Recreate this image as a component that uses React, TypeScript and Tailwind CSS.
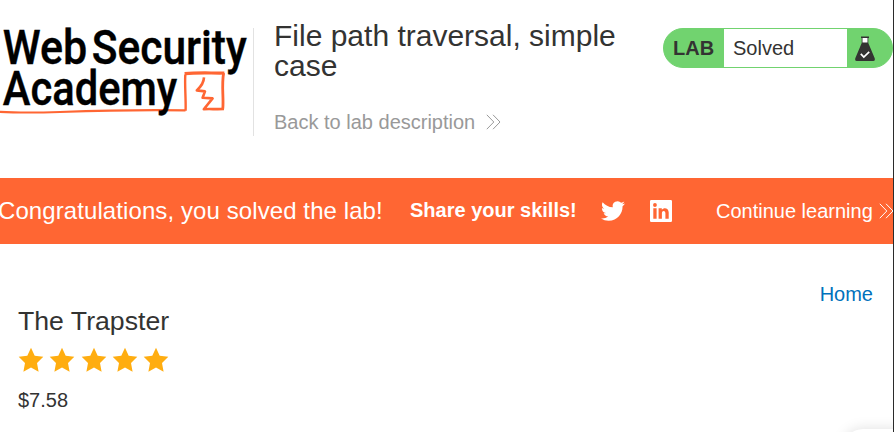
function AcademyLogo() {
  return (
    <svg className="block h-[120px] w-[250px] shrink-0" viewBox="0 8 250 120" role="img" aria-label="Web Security Academy">
      <g className="fill-black stroke-black font-['Roboto',sans-serif] text-[48px] font-medium" strokeWidth="0.4">
        <text x="2.8" y="64" textLength="84.5" lengthAdjust="spacingAndGlyphs">Web</text>
        <text x="91.8" y="64" textLength="155" lengthAdjust="spacingAndGlyphs">Security</text>
      </g>
      <g fill="none" stroke="#ff6633" strokeLinejoin="round">
        <path d="M0 111.8 C20 113 40 112.6 60 112 C100 110.6 150 109.8 185.5 110.4" strokeWidth="2.2" />
        <path d="M185.6 110.8 C186 98 184.6 86 185.3 74.6" strokeWidth="2.4" />
        <path d="M184.6 73.6 C198 72.4 211 73.2 224.4 73" strokeWidth="3.2" />
        <path d="M223.6 73 C221.4 86 223.8 97 222.8 108.6" strokeWidth="2.8" />
        <path d="M224 109 C217 109.4 209 108.8 203.8 109.2 L212.6 98.4 L202.6 97.8 L205 91.4 L196.8 90.4 C200.6 87 203.8 83 204 77.4" strokeWidth="2.6" />
      </g>
      <text x="2.8" y="105" textLength="174.5" lengthAdjust="spacingAndGlyphs" strokeWidth="0.4" className="fill-black stroke-black font-['Roboto',sans-serif] text-[48px] font-medium">Academy</text>
    </svg>
  );
}

function Chevrons({ className }: { className: string }) {
  return (
    <svg className={className} viewBox="0 0 15 16" fill="none" stroke="currentColor" strokeWidth="1">
      <path d="M0.8 0.8 L7.8 8 L0.8 15.2 M7 0.8 L14 8 L7 15.2" />
    </svg>
  );
}

function Flask() {
  return (
    <svg className="h-[26px] w-[20px]" viewBox="0 0 20 26">
      <path d="M7 2 H13 V8 H7 Z" fill="#fff" />
      <path d="M6 0.5 H14 V2 H13.3 V7 L19.6 22 Q20.6 25 18 25 H2 Q-0.6 25 0.4 22 L6.7 7 V2 H6 Z M7.5 2 V6.4 H12.5 V2 Z" fill="#333332" fillRule="evenodd" />
      <path d="M5.8 17.8 L8.8 21 L14.2 15.8" fill="none" stroke="#fff" strokeWidth="1.7" />
    </svg>
  );
}

function Star() {
  return (
    <svg className="h-[26px] w-[26px]" viewBox="0 0 26 26">
      <path d="M13 0.8 L16.7 8.8 L25.3 9.8 L19 15.9 L20.6 24.8 L13 20.6 L5.4 24.8 L7 15.9 L0.7 9.8 L9.3 8.8 Z" fill="#ffad10" />
    </svg>
  );
}

export default function App() {
  return (
    <div className="relative flex h-[432px] w-[894px] flex-col overflow-hidden border-r border-[#2b2b2b] bg-white font-['Liberation_Sans',Arial,sans-serif] text-xl text-[#333332]">
      <header className="flex h-[178px] shrink-0 items-start">
        <div className="mt-[28px] h-[108px] w-[254px] shrink-0 border-r border-[#e2e2e2]">
          <div className="-mt-[20px]"><AcademyLogo /></div>
        </div>
        <div className="ml-5 mt-[21px] w-[389px] shrink-0">
          <h1 className="w-[360px] text-[30px] leading-[30px]">File path traversal, simple case</h1>
          <a className="mt-[27px] flex items-center text-xl leading-7 text-[#999]">
            Back to lab description
            <Chevrons className="ml-[11px] h-[16px] w-[15px]" />
          </a>
        </div>
        <div className="mt-[28px] flex h-[40px] w-[230px] shrink-0 overflow-hidden rounded-[20px] border border-[#71d36f] bg-[#71d36f]">
          <span className="w-[60px] pl-[9px] text-xl font-bold leading-[38px]">LAB</span>
          <span className="w-[123px] bg-white pl-[9px] leading-[38px]">Solved</span>
          <span className="pl-[8px] pt-[7px]"><Flask /></span>
        </div>
      </header>

      <section className="flex h-[66px] shrink-0 items-center whitespace-nowrap bg-[#ff6633] text-white">
        <h2 className="-ml-[2px] w-[412px] shrink-0 text-2xl tracking-[0.09px]">Congratulations, you solved the lab!</h2>
        <b className="w-[191px] shrink-0 pb-[2px]">Share your skills!</b>
        <svg className="h-6 w-6 shrink-0" viewBox="0 0 24 24" fill="currentColor">
          <path d="M23.953 4.57a10 10 0 01-2.825.775 4.958 4.958 0 002.163-2.723c-.951.555-2.005.959-3.127 1.184a4.92 4.92 0 00-8.384 4.482C7.69 8.095 4.067 6.13 1.64 3.162a4.822 4.822 0 00-.666 2.475c0 1.71.87 3.213 2.188 4.096a4.904 4.904 0 01-2.228-.616v.06a4.923 4.923 0 003.946 4.827 4.996 4.996 0 01-2.212.085 4.936 4.936 0 004.604 3.417 9.867 9.867 0 01-6.102 2.105c-.39 0-.779-.023-1.17-.067a13.995 13.995 0 007.557 2.209c9.053 0 13.998-7.496 13.998-13.985 0-.21 0-.42-.015-.63A9.935 9.935 0 0024 4.59z" />
        </svg>
        <svg className="ml-6 h-6 w-6 shrink-0" viewBox="0 0 24 24" fill="currentColor">
          <path d="M2.2 1 H21.8 Q23 1 23 2.2 V21.8 Q23 23 21.8 23 H2.2 Q1 23 1 21.8 V2.2 Q1 1 2.2 1 Z M4.3 9.3 V19.7 H7.6 V9.3 Z M5.95 4.1 A1.9 1.9 0 1 0 5.95 7.9 A1.9 1.9 0 1 0 5.95 4.1 Z M9.6 9.3 V19.7 H12.9 V14.5 C12.9 11.2 16.4 11.4 16.4 14.3 V19.7 H19.7 V13.4 C19.7 8.8 14.8 7.9 12.8 10.8 V9.3 Z" fillRule="evenodd" />
        </svg>
        <a className="ml-[43px] flex shrink-0 items-center">
          Continue learning
          <Chevrons className="ml-[6px] h-[16px] w-[15px]" />
        </a>
      </section>

      <nav className="flex justify-end pr-[20px] pt-[36px] leading-7 text-[#0071bc]">
        <a>Home</a>
      </nav>
      <main className="pl-[18px]">
        <h3 className="-mt-[5px] text-[26.67px] leading-[36px]">The Trapster</h3>
        <div className="mt-[8px] flex gap-[5.25px]">
          <Star /><Star /><Star /><Star /><Star />
        </div>
        <div className="mt-[13px] leading-7">$7.58</div>
      </main>
      <div className="absolute -bottom-[37px] -right-[20px] h-[40px] w-[70px] rounded-[20px] bg-white shadow-[0_0_14px_rgba(0,0,0,0.13)]" />
    </div>
  );
}
